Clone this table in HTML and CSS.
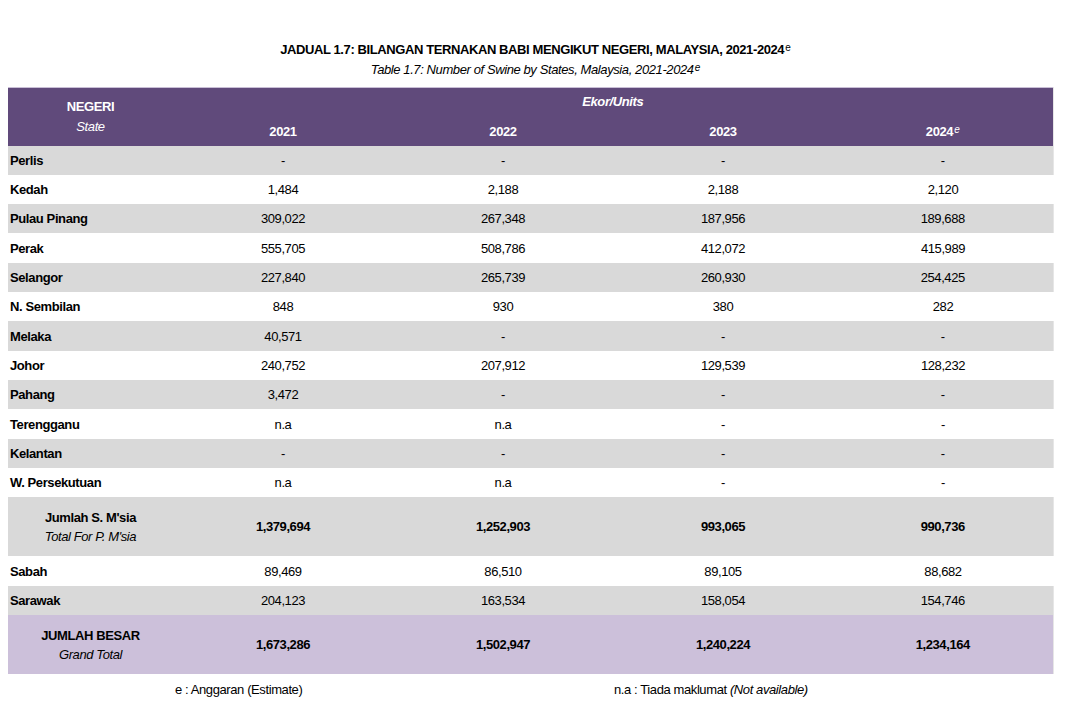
FILE: index.html
```html
<!DOCTYPE html>
<html>
<head>
<meta charset="utf-8">
<link rel="stylesheet" href="styles.css">
</head>
<body>
<div class="titles">
  <div class="title">JADUAL 1.7: BILANGAN TERNAKAN BABI MENGIKUT NEGERI, MALAYSIA, 2021-2024<sup>e</sup></div>
  <div class="subtitle">Table 1.7: Number of Swine by States, Malaysia, 2021-2024<sup>e</sup></div>
</div>
<table class="data">
  <colgroup>
    <col class="c-state"><col class="c-year"><col class="c-year"><col class="c-year"><col class="c-year">
  </colgroup>
  <thead>
    <tr class="h1">
      <th rowspan="2" class="state-h"><div class="b">NEGERI</div><div class="i">State</div></th>
      <th colspan="4" class="units"><span class="units-t">Ekor/Units</span></th>
    </tr>
    <tr class="h2">
      <th>2021</th><th>2022</th><th>2023</th><th>2024<sup>e</sup></th>
    </tr>
  </thead>
  <tbody>
    <tr class="g"><td class="st">Perlis</td><td>-</td><td>-</td><td>-</td><td>-</td></tr>
    <tr class="w"><td class="st">Kedah</td><td>1,484</td><td>2,188</td><td>2,188</td><td>2,120</td></tr>
    <tr class="g"><td class="st">Pulau Pinang</td><td>309,022</td><td>267,348</td><td>187,956</td><td>189,688</td></tr>
    <tr class="w"><td class="st">Perak</td><td>555,705</td><td>508,786</td><td>412,072</td><td>415,989</td></tr>
    <tr class="g"><td class="st">Selangor</td><td>227,840</td><td>265,739</td><td>260,930</td><td>254,425</td></tr>
    <tr class="w"><td class="st">N. Sembilan</td><td>848</td><td>930</td><td>380</td><td>282</td></tr>
    <tr class="g"><td class="st">Melaka</td><td>40,571</td><td>-</td><td>-</td><td>-</td></tr>
    <tr class="w"><td class="st">Johor</td><td>240,752</td><td>207,912</td><td>129,539</td><td>128,232</td></tr>
    <tr class="g"><td class="st">Pahang</td><td>3,472</td><td>-</td><td>-</td><td>-</td></tr>
    <tr class="w"><td class="st">Terengganu</td><td>n.a</td><td>n.a</td><td>-</td><td>-</td></tr>
    <tr class="g"><td class="st">Kelantan</td><td>-</td><td>-</td><td>-</td><td>-</td></tr>
    <tr class="w"><td class="st">W. Persekutuan</td><td>n.a</td><td>n.a</td><td>-</td><td>-</td></tr>
    <tr class="g tot"><td class="st-c"><div class="b">Jumlah S. M'sia</div><div class="i">Total For P. M'sia</div></td><td>1,379,694</td><td>1,252,903</td><td>993,065</td><td>990,736</td></tr>
    <tr class="w"><td class="st">Sabah</td><td>89,469</td><td>86,510</td><td>89,105</td><td>88,682</td></tr>
    <tr class="g"><td class="st">Sarawak</td><td>204,123</td><td>163,534</td><td>158,054</td><td>154,746</td></tr>
    <tr class="p tot"><td class="st-c"><div class="b">JUMLAH BESAR</div><div class="i">Grand Total</div></td><td>1,673,286</td><td>1,502,947</td><td>1,240,224</td><td>1,234,164</td></tr>
  </tbody>
</table>
<div class="notes">
  <div class="note n1">e : Anggaran (Estimate)</div>
  <div class="note n2">n.a : Tiada maklumat <i>(Not available)</i></div>
</div>
</body>
</html>
```

FILE: styles.css
```css
body {
  margin: 8px;
  font-family: "Liberation Sans Narrow", "Arial Narrow", "Liberation Sans", Arial, sans-serif;
  font-size: 13px;
  letter-spacing: -0.4px;
  color: #000;
  background: #fff;
}
sup {
  font-size: 10px;
  vertical-align: 3px;
  line-height: 0;
  font-style: italic;
  font-weight: normal;
  letter-spacing: 0;
  margin-left: 1px;
}
.titles {
  text-align: center;
  margin-top: 33px;
  margin-bottom: 9px;
  padding-left: 6px;
}
.title {
  font-weight: bold;
  line-height: 17px;
}
.title sup { font-style: normal; }
.subtitle {
  font-style: italic;
  line-height: 17px;
  margin-top: 3px;
}
.data {
  border-collapse: collapse;
  table-layout: fixed;
  width: 1045px;
}
.c-state { width: 165px; }
.c-year { width: 220px; }
thead th {
  background: #604a7b;
  color: #fff;
  font-weight: bold;
  padding: 0;
}
.h1 th { border-top: 1px solid #c9bfd6; }
.h1 { height: 29px; }
.h2 { height: 29px; }
.state-h {
  vertical-align: top;
  text-align: center;
  padding-top: 9px !important;
  line-height: 20px;
}
.state-h .i { font-weight: normal; font-style: italic; }
.units { vertical-align: top; padding-top: 6px !important; font-style: italic; }
.h2 th { vertical-align: top; padding-top: 7px; }
.h2 th sup { font-weight: normal; }
tbody tr { height: 29.33px; }
tbody td {
  text-align: center;
  padding: 0;
  vertical-align: middle;
}
.g td { background: #d9d9d9; }
.w td { background: #fff; }
.p td { background: #ccc0da; }
.st { text-align: left; padding-left: 2px !important; font-weight: bold; }
.tot { height: 59px; }
.tot td { font-weight: bold; }
.st-c { text-align: center; line-height: 19px; }
.st-c .i { font-weight: normal; font-style: italic; }
.g td:last-child, .p td:last-child, thead th:last-child { border-right: 1px solid #e6e6e6; }
.notes {
  display: grid;
  grid-template-columns: 165px 440px 440px;
  margin-top: 8px;
}
.n1 { grid-column: 2; padding-left: 2px; }
.n2 { grid-column: 3; padding-left: 1px; }
```
